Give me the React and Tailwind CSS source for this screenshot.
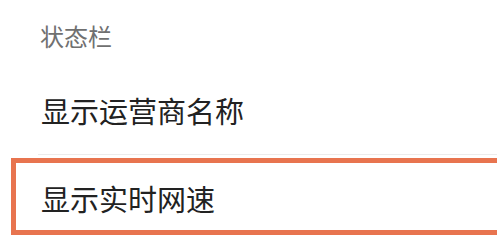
import React from "react";

const App = () => {
  return (
    <div
      className="w-[497px] h-[244px] bg-white overflow-hidden"
      style={{ fontFamily: '"Noto Sans CJK SC", "Noto Sans", sans-serif' }}
    >
      <div className="h-[72px] pl-[40px] flex items-center text-[24px] text-[#707070]">
        状态栏
      </div>
      <div className="h-[78px] pl-[41px] flex items-center text-[29px] text-[#222222]">
        显示运营商名称
      </div>
      <div className="mt-[4px] ml-[38px] h-px bg-[#ececec]" />
      <div className="mt-[3px] ml-[11px] h-[77px] border-[5px] border-r-0 border-[#e8744f] flex items-center pl-[25px] pt-[4px] text-[29px] text-[#222222]">
        显示实时网速
      </div>
    </div>
  );
};

export default App;
